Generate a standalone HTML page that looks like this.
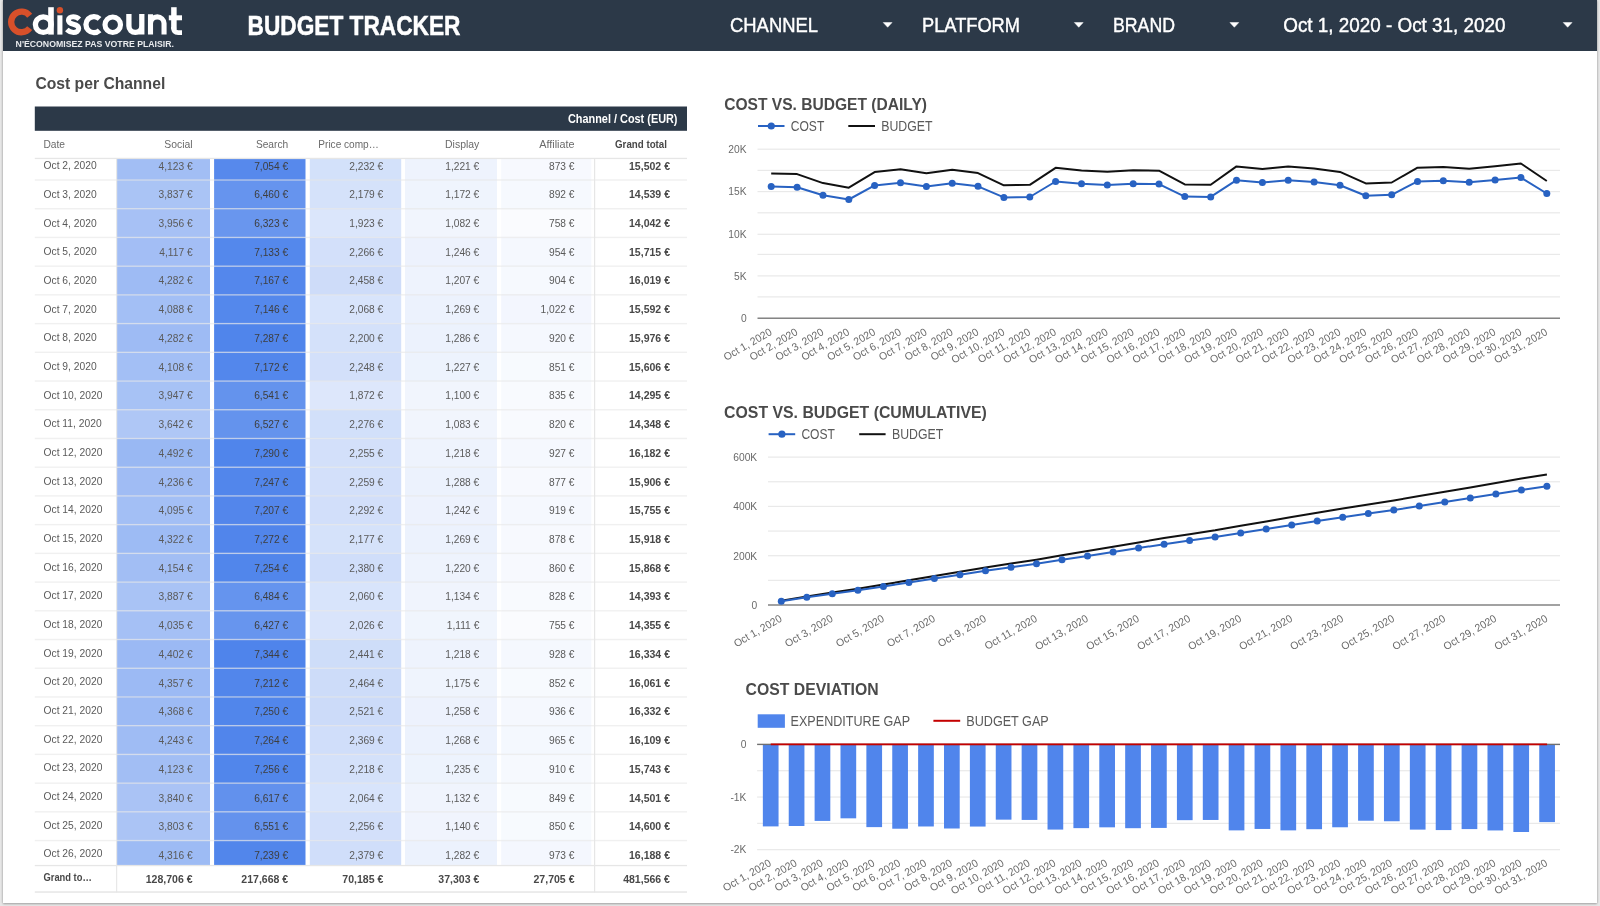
<!DOCTYPE html>
<html lang="en"><head><meta charset="utf-8"><title>Budget Tracker</title>
<style>
html,body{margin:0;padding:0;}
body{width:1600px;height:906px;overflow:hidden;background:#e7e7e7;font-family:"Liberation Sans",sans-serif;position:relative;}
.card{position:absolute;left:3px;top:0;width:1594px;height:903px;background:#ffffff;box-shadow:0 0 2.5px rgba(0,0,0,.22),0 1px 2px rgba(0,0,0,.22);}
.hdr{position:absolute;left:3px;top:0;width:1594px;height:51.3px;background:#2c3948;}
svg{position:absolute;left:0;top:0;overflow:visible;will-change:transform;font-family:"Liberation Sans",sans-serif;}
svg text{white-space:pre;}
</style></head><body>
<div class="card"></div>
<div class="hdr"></div>

<svg id="header" width="1600" height="52" viewBox="0 0 1600 52">
<path d="M 29.68 15.75 A 10.3 10.3 0 1 0 29.68 28.15" fill="none" stroke="#d7502a" stroke-width="6.3"/>
<g fill="none" stroke="#ffffff" stroke-width="5.3">
<ellipse cx="43.3" cy="24.6" rx="7.9" ry="7.8"/><path d="M 51.0 7.2 V 34.6" stroke-width="5.6"/>
<path d="M 59.9 15.3 V 34.6" stroke-width="5.1"/>
<path d="M 79.3 19.3 C 77.6 17.6 75.6 16.7 73.2 16.7 C 70.2 16.7 68.4 18.2 68.4 20.2 C 68.4 22.7 70.6 23.5 73.4 24.2 C 76.6 25.0 78.7 26.0 78.7 28.6 C 78.7 30.9 76.6 32.4 73.5 32.4 C 70.9 32.4 68.6 31.4 66.8 29.6" stroke-width="5.0"/>
<path d="M 99.59 18.81 A 8.05 8.05 0 1 0 99.59 30.39"/>
<circle cx="112.75" cy="24.7" r="7.75" stroke-width="5.15"/>
<path d="M 128.9 14.1 V 26.0 A 6.45 6.45 0 0 0 141.8 26.0 M 141.8 14.1 V 34.6"/>
<path d="M 150.5 14.3 V 34.6 M 150.5 23.4 A 6.78 6.78 0 0 1 164.05 23.4 V 34.6" stroke-width="5.1"/>
<path d="M 173.9 7.2 V 29.5" stroke-width="5.5"/><path d="M 173.6 27.0 C 173.6 31.6 175.6 32.65 178.2 32.65 H 182.0" stroke-width="4.9"/><path d="M 168.8 17.8 H 182.0" stroke-width="5.0"/>
</g>
<circle cx="59.9" cy="10.2" r="3.2" fill="#d7502a"/>
<text x="15.60" y="46.85" font-size="8.3" fill="#e9ebee" font-weight="700" textLength="158.40" lengthAdjust="spacingAndGlyphs">N'ÉCONOMISEZ PAS VOTRE PLAISIR.</text>
<text x="247.50" y="35.30" font-size="27.0" fill="#ffffff" font-weight="700" textLength="213.00" lengthAdjust="spacingAndGlyphs" stroke="#ffffff" stroke-width="0.5">BUDGET TRACKER</text>
<text x="730.00" y="32.20" font-size="19.4" fill="#ffffff" textLength="88.10" lengthAdjust="spacingAndGlyphs" stroke="#ffffff" stroke-width="0.4">CHANNEL</text>
<text x="922.00" y="32.20" font-size="19.4" fill="#ffffff" textLength="98.00" lengthAdjust="spacingAndGlyphs" stroke="#ffffff" stroke-width="0.4">PLATFORM</text>
<text x="1113.00" y="32.20" font-size="19.4" fill="#ffffff" textLength="62.00" lengthAdjust="spacingAndGlyphs" stroke="#ffffff" stroke-width="0.4">BRAND</text>
<text x="1283.25" y="32.20" font-size="19.4" fill="#ffffff" textLength="222.25" lengthAdjust="spacingAndGlyphs" stroke="#ffffff" stroke-width="0.4">Oct 1, 2020 - Oct 31, 2020</text>
<path d="M 883.25 22.55 L 892.05 22.55 L 887.65 27.25 Z" fill="#ffffff" stroke="#ffffff" stroke-width="0.5" stroke-linejoin="round"/>
<path d="M 1074.35 22.55 L 1083.15 22.55 L 1078.75 27.25 Z" fill="#ffffff" stroke="#ffffff" stroke-width="0.5" stroke-linejoin="round"/>
<path d="M 1229.95 22.55 L 1238.75 22.55 L 1234.35 27.25 Z" fill="#ffffff" stroke="#ffffff" stroke-width="0.5" stroke-linejoin="round"/>
<path d="M 1563.25 22.55 L 1572.05 22.55 L 1567.65 27.25 Z" fill="#ffffff" stroke="#ffffff" stroke-width="0.5" stroke-linejoin="round"/>
</svg>
<svg id="table" width="700" height="906" viewBox="0 0 700 906">
<text x="35.40" y="89.00" font-size="16.5" fill="#4a4a4a" font-weight="700" textLength="129.90" lengthAdjust="spacingAndGlyphs">Cost per Channel</text>
<rect x="34.8" y="106.5" width="652.2" height="24.3" fill="#2c3948"/>
<text x="568.00" y="122.50" font-size="12.2" fill="#ffffff" font-weight="700" textLength="109.50" lengthAdjust="spacingAndGlyphs">Channel / Cost (EUR)</text>
<text x="43.40" y="147.60" font-size="10.7" fill="#6a6a6a" textLength="21.60" lengthAdjust="spacingAndGlyphs">Date</text>
<text x="164.30" y="147.60" font-size="10.7" fill="#6a6a6a" textLength="28.30" lengthAdjust="spacingAndGlyphs">Social</text>
<text x="255.90" y="147.60" font-size="10.7" fill="#6a6a6a" textLength="32.30" lengthAdjust="spacingAndGlyphs">Search</text>
<text x="445.05" y="147.60" font-size="10.7" fill="#6a6a6a" textLength="34.25" lengthAdjust="spacingAndGlyphs">Display</text>
<text x="539.25" y="147.60" font-size="10.7" fill="#6a6a6a" textLength="35.25" lengthAdjust="spacingAndGlyphs">Affiliate</text>
<text x="318.30" y="147.60" font-size="10.7" fill="#6a6a6a" textLength="60.50" lengthAdjust="spacingAndGlyphs">Price comp…</text>
<text x="615.00" y="147.60" font-size="10.7" fill="#484848" font-weight="700" textLength="52.00" lengthAdjust="spacingAndGlyphs">Grand total</text>
<clipPath id="clipRows"><rect x="30" y="158.5" width="660" height="706.8"/></clipPath>
<g clip-path="url(#clipRows)">
<rect x="116.9" y="151.28" width="93.1" height="28.77" fill="#a2bef4"/>
<rect x="214.1" y="151.28" width="91.4" height="28.77" fill="#5789ec"/>
<rect x="309.8" y="151.28" width="91.4" height="28.77" fill="#d3e1fa"/>
<rect x="405.0" y="151.28" width="92.0" height="28.77" fill="#eef3fd"/>
<rect x="501.2" y="151.28" width="90.1" height="28.77" fill="#f7f9fe"/>
<rect x="116.9" y="180.00" width="93.1" height="28.77" fill="#aac4f5"/>
<rect x="214.1" y="180.00" width="91.4" height="28.77" fill="#6694ee"/>
<rect x="309.8" y="180.00" width="91.4" height="28.77" fill="#d5e2fa"/>
<rect x="405.0" y="180.00" width="92.0" height="28.77" fill="#eff4fd"/>
<rect x="501.2" y="180.00" width="90.1" height="28.77" fill="#f6f9fe"/>
<rect x="116.9" y="208.72" width="93.1" height="28.77" fill="#a7c1f5"/>
<rect x="214.1" y="208.72" width="91.4" height="28.77" fill="#6996ee"/>
<rect x="309.8" y="208.72" width="91.4" height="28.77" fill="#dbe6fb"/>
<rect x="405.0" y="208.72" width="92.0" height="28.77" fill="#f1f5fd"/>
<rect x="501.2" y="208.72" width="90.1" height="28.77" fill="#fafbfe"/>
<rect x="116.9" y="237.44" width="93.1" height="28.77" fill="#a3bef5"/>
<rect x="214.1" y="237.44" width="91.4" height="28.77" fill="#5488ec"/>
<rect x="309.8" y="237.44" width="91.4" height="28.77" fill="#d3e0fa"/>
<rect x="405.0" y="237.44" width="92.0" height="28.77" fill="#edf2fd"/>
<rect x="501.2" y="237.44" width="90.1" height="28.77" fill="#f5f8fe"/>
<rect x="116.9" y="266.16" width="93.1" height="28.77" fill="#9ebbf4"/>
<rect x="214.1" y="266.16" width="91.4" height="28.77" fill="#5487ec"/>
<rect x="309.8" y="266.16" width="91.4" height="28.77" fill="#cedcf9"/>
<rect x="405.0" y="266.16" width="92.0" height="28.77" fill="#eef3fd"/>
<rect x="501.2" y="266.16" width="90.1" height="28.77" fill="#f6f9fe"/>
<rect x="116.9" y="294.88" width="93.1" height="28.77" fill="#a3bff5"/>
<rect x="214.1" y="294.88" width="91.4" height="28.77" fill="#5488ec"/>
<rect x="309.8" y="294.88" width="91.4" height="28.77" fill="#d8e4fb"/>
<rect x="405.0" y="294.88" width="92.0" height="28.77" fill="#ecf2fd"/>
<rect x="501.2" y="294.88" width="90.1" height="28.77" fill="#f3f6fe"/>
<rect x="116.9" y="323.60" width="93.1" height="28.77" fill="#9ebbf4"/>
<rect x="214.1" y="323.60" width="91.4" height="28.77" fill="#5085eb"/>
<rect x="309.8" y="323.60" width="91.4" height="28.77" fill="#d4e1fa"/>
<rect x="405.0" y="323.60" width="92.0" height="28.77" fill="#ecf2fd"/>
<rect x="501.2" y="323.60" width="90.1" height="28.77" fill="#f5f8fe"/>
<rect x="116.9" y="352.32" width="93.1" height="28.77" fill="#a3bff5"/>
<rect x="214.1" y="352.32" width="91.4" height="28.77" fill="#5387ec"/>
<rect x="309.8" y="352.32" width="91.4" height="28.77" fill="#d3e0fa"/>
<rect x="405.0" y="352.32" width="92.0" height="28.77" fill="#edf3fd"/>
<rect x="501.2" y="352.32" width="90.1" height="28.77" fill="#f7fafe"/>
<rect x="116.9" y="381.04" width="93.1" height="28.77" fill="#a7c2f5"/>
<rect x="214.1" y="381.04" width="91.4" height="28.77" fill="#6493ed"/>
<rect x="309.8" y="381.04" width="91.4" height="28.77" fill="#dde7fb"/>
<rect x="405.0" y="381.04" width="92.0" height="28.77" fill="#f1f5fd"/>
<rect x="501.2" y="381.04" width="90.1" height="28.77" fill="#f8fafe"/>
<rect x="116.9" y="409.76" width="93.1" height="28.77" fill="#afc7f6"/>
<rect x="214.1" y="409.76" width="91.4" height="28.77" fill="#6493ed"/>
<rect x="309.8" y="409.76" width="91.4" height="28.77" fill="#d2e0fa"/>
<rect x="405.0" y="409.76" width="92.0" height="28.77" fill="#f1f5fd"/>
<rect x="501.2" y="409.76" width="90.1" height="28.77" fill="#f8fafe"/>
<rect x="116.9" y="438.48" width="93.1" height="28.77" fill="#99b8f3"/>
<rect x="214.1" y="438.48" width="91.4" height="28.77" fill="#5085eb"/>
<rect x="309.8" y="438.48" width="91.4" height="28.77" fill="#d3e0fa"/>
<rect x="405.0" y="438.48" width="92.0" height="28.77" fill="#eef3fd"/>
<rect x="501.2" y="438.48" width="90.1" height="28.77" fill="#f5f8fe"/>
<rect x="116.9" y="467.20" width="93.1" height="28.77" fill="#a0bcf4"/>
<rect x="214.1" y="467.20" width="91.4" height="28.77" fill="#5286eb"/>
<rect x="309.8" y="467.20" width="91.4" height="28.77" fill="#d3e0fa"/>
<rect x="405.0" y="467.20" width="92.0" height="28.77" fill="#ecf2fd"/>
<rect x="501.2" y="467.20" width="90.1" height="28.77" fill="#f7f9fe"/>
<rect x="116.9" y="495.92" width="93.1" height="28.77" fill="#a3bff5"/>
<rect x="214.1" y="495.92" width="91.4" height="28.77" fill="#5386eb"/>
<rect x="309.8" y="495.92" width="91.4" height="28.77" fill="#d2dffa"/>
<rect x="405.0" y="495.92" width="92.0" height="28.77" fill="#edf2fd"/>
<rect x="501.2" y="495.92" width="90.1" height="28.77" fill="#f5f8fe"/>
<rect x="116.9" y="524.64" width="93.1" height="28.77" fill="#9dbbf4"/>
<rect x="214.1" y="524.64" width="91.4" height="28.77" fill="#5185eb"/>
<rect x="309.8" y="524.64" width="91.4" height="28.77" fill="#d5e2fa"/>
<rect x="405.0" y="524.64" width="92.0" height="28.77" fill="#ecf2fd"/>
<rect x="501.2" y="524.64" width="90.1" height="28.77" fill="#f7f9fe"/>
<rect x="116.9" y="553.36" width="93.1" height="28.77" fill="#a2bef4"/>
<rect x="214.1" y="553.36" width="91.4" height="28.77" fill="#5186eb"/>
<rect x="309.8" y="553.36" width="91.4" height="28.77" fill="#d0defa"/>
<rect x="405.0" y="553.36" width="92.0" height="28.77" fill="#eef3fd"/>
<rect x="501.2" y="553.36" width="90.1" height="28.77" fill="#f7f9fe"/>
<rect x="116.9" y="582.08" width="93.1" height="28.77" fill="#a9c3f5"/>
<rect x="214.1" y="582.08" width="91.4" height="28.77" fill="#6594ee"/>
<rect x="309.8" y="582.08" width="91.4" height="28.77" fill="#d8e4fb"/>
<rect x="405.0" y="582.08" width="92.0" height="28.77" fill="#f0f4fd"/>
<rect x="501.2" y="582.08" width="90.1" height="28.77" fill="#f8fafe"/>
<rect x="116.9" y="610.80" width="93.1" height="28.77" fill="#a5c0f5"/>
<rect x="214.1" y="610.80" width="91.4" height="28.77" fill="#6795ee"/>
<rect x="309.8" y="610.80" width="91.4" height="28.77" fill="#d9e4fb"/>
<rect x="405.0" y="610.80" width="92.0" height="28.77" fill="#f0f5fd"/>
<rect x="501.2" y="610.80" width="90.1" height="28.77" fill="#fafbfe"/>
<rect x="116.9" y="639.52" width="93.1" height="28.77" fill="#9bb9f4"/>
<rect x="214.1" y="639.52" width="91.4" height="28.77" fill="#4f84eb"/>
<rect x="309.8" y="639.52" width="91.4" height="28.77" fill="#ceddf9"/>
<rect x="405.0" y="639.52" width="92.0" height="28.77" fill="#eef3fd"/>
<rect x="501.2" y="639.52" width="90.1" height="28.77" fill="#f5f8fe"/>
<rect x="116.9" y="668.24" width="93.1" height="28.77" fill="#9cbaf4"/>
<rect x="214.1" y="668.24" width="91.4" height="28.77" fill="#5286eb"/>
<rect x="309.8" y="668.24" width="91.4" height="28.77" fill="#cddcf9"/>
<rect x="405.0" y="668.24" width="92.0" height="28.77" fill="#eff4fd"/>
<rect x="501.2" y="668.24" width="90.1" height="28.77" fill="#f7fafe"/>
<rect x="116.9" y="696.96" width="93.1" height="28.77" fill="#9cbaf4"/>
<rect x="214.1" y="696.96" width="91.4" height="28.77" fill="#5186eb"/>
<rect x="309.8" y="696.96" width="91.4" height="28.77" fill="#ccdbf9"/>
<rect x="405.0" y="696.96" width="92.0" height="28.77" fill="#edf2fd"/>
<rect x="501.2" y="696.96" width="90.1" height="28.77" fill="#f5f8fe"/>
<rect x="116.9" y="725.68" width="93.1" height="28.77" fill="#9fbcf4"/>
<rect x="214.1" y="725.68" width="91.4" height="28.77" fill="#5185eb"/>
<rect x="309.8" y="725.68" width="91.4" height="28.77" fill="#d0defa"/>
<rect x="405.0" y="725.68" width="92.0" height="28.77" fill="#ecf2fd"/>
<rect x="501.2" y="725.68" width="90.1" height="28.77" fill="#f4f8fe"/>
<rect x="116.9" y="754.40" width="93.1" height="28.77" fill="#a2bef4"/>
<rect x="214.1" y="754.40" width="91.4" height="28.77" fill="#5186eb"/>
<rect x="309.8" y="754.40" width="91.4" height="28.77" fill="#d4e1fa"/>
<rect x="405.0" y="754.40" width="92.0" height="28.77" fill="#edf3fd"/>
<rect x="501.2" y="754.40" width="90.1" height="28.77" fill="#f6f9fe"/>
<rect x="116.9" y="783.12" width="93.1" height="28.77" fill="#aac3f5"/>
<rect x="214.1" y="783.12" width="91.4" height="28.77" fill="#6291ed"/>
<rect x="309.8" y="783.12" width="91.4" height="28.77" fill="#d8e4fb"/>
<rect x="405.0" y="783.12" width="92.0" height="28.77" fill="#f0f4fd"/>
<rect x="501.2" y="783.12" width="90.1" height="28.77" fill="#f7fafe"/>
<rect x="116.9" y="811.84" width="93.1" height="28.77" fill="#abc4f5"/>
<rect x="214.1" y="811.84" width="91.4" height="28.77" fill="#6492ed"/>
<rect x="309.8" y="811.84" width="91.4" height="28.77" fill="#d3e0fa"/>
<rect x="405.0" y="811.84" width="92.0" height="28.77" fill="#f0f4fd"/>
<rect x="501.2" y="811.84" width="90.1" height="28.77" fill="#f7fafe"/>
<rect x="116.9" y="840.56" width="93.1" height="28.77" fill="#9dbbf4"/>
<rect x="214.1" y="840.56" width="91.4" height="28.77" fill="#5286eb"/>
<rect x="309.8" y="840.56" width="91.4" height="28.77" fill="#d0defa"/>
<rect x="405.0" y="840.56" width="92.0" height="28.77" fill="#ecf2fd"/>
<rect x="501.2" y="840.56" width="90.1" height="28.77" fill="#f4f7fe"/>
</g>
<g fill="#e6e6e6">
<rect x="34.8" y="157.8" width="652.2" height="1.3"/>
<rect x="34.8" y="179.30" width="652.2" height="1.4" fill-opacity="0.62"/>
<rect x="34.8" y="208.02" width="652.2" height="1.4" fill-opacity="0.62"/>
<rect x="34.8" y="236.74" width="652.2" height="1.4" fill-opacity="0.62"/>
<rect x="34.8" y="265.46" width="652.2" height="1.4" fill-opacity="0.62"/>
<rect x="34.8" y="294.18" width="652.2" height="1.4" fill-opacity="0.62"/>
<rect x="34.8" y="322.90" width="652.2" height="1.4" fill-opacity="0.62"/>
<rect x="34.8" y="351.62" width="652.2" height="1.4" fill-opacity="0.62"/>
<rect x="34.8" y="380.34" width="652.2" height="1.4" fill-opacity="0.62"/>
<rect x="34.8" y="409.06" width="652.2" height="1.4" fill-opacity="0.62"/>
<rect x="34.8" y="437.78" width="652.2" height="1.4" fill-opacity="0.62"/>
<rect x="34.8" y="466.50" width="652.2" height="1.4" fill-opacity="0.62"/>
<rect x="34.8" y="495.22" width="652.2" height="1.4" fill-opacity="0.62"/>
<rect x="34.8" y="523.94" width="652.2" height="1.4" fill-opacity="0.62"/>
<rect x="34.8" y="552.66" width="652.2" height="1.4" fill-opacity="0.62"/>
<rect x="34.8" y="581.38" width="652.2" height="1.4" fill-opacity="0.62"/>
<rect x="34.8" y="610.10" width="652.2" height="1.4" fill-opacity="0.62"/>
<rect x="34.8" y="638.82" width="652.2" height="1.4" fill-opacity="0.62"/>
<rect x="34.8" y="667.54" width="652.2" height="1.4" fill-opacity="0.62"/>
<rect x="34.8" y="696.26" width="652.2" height="1.4" fill-opacity="0.62"/>
<rect x="34.8" y="724.98" width="652.2" height="1.4" fill-opacity="0.62"/>
<rect x="34.8" y="753.70" width="652.2" height="1.4" fill-opacity="0.62"/>
<rect x="34.8" y="782.42" width="652.2" height="1.4" fill-opacity="0.62"/>
<rect x="34.8" y="811.14" width="652.2" height="1.4" fill-opacity="0.62"/>
<rect x="34.8" y="839.86" width="652.2" height="1.4" fill-opacity="0.62"/>
<rect x="34.8" y="864.9" width="652.2" height="1.3"/>
<rect x="34.8" y="891.3" width="652.2" height="1.5"/>
<rect x="116.1" y="158.5" width="1.1" height="733.9"/>
<rect x="594.0" y="158.5" width="1.2" height="733.9"/>
</g>
<g clip-path="url(#clipRows)">
<text x="43.50" y="169.33" font-size="10.8" fill="#5a5a5a" textLength="53.16" lengthAdjust="spacingAndGlyphs">Oct 2, 2020</text>
<text x="158.58" y="169.52" font-size="10.8" fill="#5a5a5a" textLength="34.02" lengthAdjust="spacingAndGlyphs">4,123 €</text>
<text x="254.18" y="169.52" font-size="10.8" fill="#3e3e3e" textLength="34.02" lengthAdjust="spacingAndGlyphs">7,054 €</text>
<text x="349.28" y="169.52" font-size="10.8" fill="#5a5a5a" textLength="34.02" lengthAdjust="spacingAndGlyphs">2,232 €</text>
<text x="445.28" y="169.52" font-size="10.8" fill="#5a5a5a" textLength="34.02" lengthAdjust="spacingAndGlyphs">1,221 €</text>
<text x="548.99" y="169.52" font-size="10.8" fill="#5a5a5a" textLength="25.51" lengthAdjust="spacingAndGlyphs">873 €</text>
<text x="629.01" y="169.52" font-size="10.8" fill="#484848" font-weight="700" textLength="40.99" lengthAdjust="spacingAndGlyphs">15,502 €</text>
<text x="43.50" y="198.00" font-size="10.8" fill="#5a5a5a" textLength="53.16" lengthAdjust="spacingAndGlyphs">Oct 3, 2020</text>
<text x="158.58" y="198.25" font-size="10.8" fill="#5a5a5a" textLength="34.02" lengthAdjust="spacingAndGlyphs">3,837 €</text>
<text x="254.18" y="198.25" font-size="10.8" fill="#3e3e3e" textLength="34.02" lengthAdjust="spacingAndGlyphs">6,460 €</text>
<text x="349.28" y="198.25" font-size="10.8" fill="#5a5a5a" textLength="34.02" lengthAdjust="spacingAndGlyphs">2,179 €</text>
<text x="445.28" y="198.25" font-size="10.8" fill="#5a5a5a" textLength="34.02" lengthAdjust="spacingAndGlyphs">1,172 €</text>
<text x="548.99" y="198.25" font-size="10.8" fill="#5a5a5a" textLength="25.51" lengthAdjust="spacingAndGlyphs">892 €</text>
<text x="629.01" y="198.25" font-size="10.8" fill="#484848" font-weight="700" textLength="40.99" lengthAdjust="spacingAndGlyphs">14,539 €</text>
<text x="43.50" y="226.67" font-size="10.8" fill="#5a5a5a" textLength="53.16" lengthAdjust="spacingAndGlyphs">Oct 4, 2020</text>
<text x="158.58" y="226.98" font-size="10.8" fill="#5a5a5a" textLength="34.02" lengthAdjust="spacingAndGlyphs">3,956 €</text>
<text x="254.18" y="226.98" font-size="10.8" fill="#3e3e3e" textLength="34.02" lengthAdjust="spacingAndGlyphs">6,323 €</text>
<text x="349.28" y="226.98" font-size="10.8" fill="#5a5a5a" textLength="34.02" lengthAdjust="spacingAndGlyphs">1,923 €</text>
<text x="445.28" y="226.98" font-size="10.8" fill="#5a5a5a" textLength="34.02" lengthAdjust="spacingAndGlyphs">1,082 €</text>
<text x="548.99" y="226.98" font-size="10.8" fill="#5a5a5a" textLength="25.51" lengthAdjust="spacingAndGlyphs">758 €</text>
<text x="629.01" y="226.98" font-size="10.8" fill="#484848" font-weight="700" textLength="40.99" lengthAdjust="spacingAndGlyphs">14,042 €</text>
<text x="43.50" y="255.34" font-size="10.8" fill="#5a5a5a" textLength="53.16" lengthAdjust="spacingAndGlyphs">Oct 5, 2020</text>
<text x="159.34" y="255.71" font-size="10.8" fill="#5a5a5a" textLength="33.26" lengthAdjust="spacingAndGlyphs">4,117 €</text>
<text x="254.18" y="255.71" font-size="10.8" fill="#3e3e3e" textLength="34.02" lengthAdjust="spacingAndGlyphs">7,133 €</text>
<text x="349.28" y="255.71" font-size="10.8" fill="#5a5a5a" textLength="34.02" lengthAdjust="spacingAndGlyphs">2,266 €</text>
<text x="445.28" y="255.71" font-size="10.8" fill="#5a5a5a" textLength="34.02" lengthAdjust="spacingAndGlyphs">1,246 €</text>
<text x="548.99" y="255.71" font-size="10.8" fill="#5a5a5a" textLength="25.51" lengthAdjust="spacingAndGlyphs">954 €</text>
<text x="629.01" y="255.71" font-size="10.8" fill="#484848" font-weight="700" textLength="40.99" lengthAdjust="spacingAndGlyphs">15,715 €</text>
<text x="43.50" y="284.01" font-size="10.8" fill="#5a5a5a" textLength="53.16" lengthAdjust="spacingAndGlyphs">Oct 6, 2020</text>
<text x="158.58" y="284.44" font-size="10.8" fill="#5a5a5a" textLength="34.02" lengthAdjust="spacingAndGlyphs">4,282 €</text>
<text x="254.18" y="284.44" font-size="10.8" fill="#3e3e3e" textLength="34.02" lengthAdjust="spacingAndGlyphs">7,167 €</text>
<text x="349.28" y="284.44" font-size="10.8" fill="#5a5a5a" textLength="34.02" lengthAdjust="spacingAndGlyphs">2,458 €</text>
<text x="445.28" y="284.44" font-size="10.8" fill="#5a5a5a" textLength="34.02" lengthAdjust="spacingAndGlyphs">1,207 €</text>
<text x="548.99" y="284.44" font-size="10.8" fill="#5a5a5a" textLength="25.51" lengthAdjust="spacingAndGlyphs">904 €</text>
<text x="629.01" y="284.44" font-size="10.8" fill="#484848" font-weight="700" textLength="40.99" lengthAdjust="spacingAndGlyphs">16,019 €</text>
<text x="43.50" y="312.68" font-size="10.8" fill="#5a5a5a" textLength="53.16" lengthAdjust="spacingAndGlyphs">Oct 7, 2020</text>
<text x="158.58" y="313.17" font-size="10.8" fill="#5a5a5a" textLength="34.02" lengthAdjust="spacingAndGlyphs">4,088 €</text>
<text x="254.18" y="313.17" font-size="10.8" fill="#3e3e3e" textLength="34.02" lengthAdjust="spacingAndGlyphs">7,146 €</text>
<text x="349.28" y="313.17" font-size="10.8" fill="#5a5a5a" textLength="34.02" lengthAdjust="spacingAndGlyphs">2,068 €</text>
<text x="445.28" y="313.17" font-size="10.8" fill="#5a5a5a" textLength="34.02" lengthAdjust="spacingAndGlyphs">1,269 €</text>
<text x="540.48" y="313.17" font-size="10.8" fill="#5a5a5a" textLength="34.02" lengthAdjust="spacingAndGlyphs">1,022 €</text>
<text x="629.01" y="313.17" font-size="10.8" fill="#484848" font-weight="700" textLength="40.99" lengthAdjust="spacingAndGlyphs">15,592 €</text>
<text x="43.50" y="341.35" font-size="10.8" fill="#5a5a5a" textLength="53.16" lengthAdjust="spacingAndGlyphs">Oct 8, 2020</text>
<text x="158.58" y="341.90" font-size="10.8" fill="#5a5a5a" textLength="34.02" lengthAdjust="spacingAndGlyphs">4,282 €</text>
<text x="254.18" y="341.90" font-size="10.8" fill="#3e3e3e" textLength="34.02" lengthAdjust="spacingAndGlyphs">7,287 €</text>
<text x="349.28" y="341.90" font-size="10.8" fill="#5a5a5a" textLength="34.02" lengthAdjust="spacingAndGlyphs">2,200 €</text>
<text x="445.28" y="341.90" font-size="10.8" fill="#5a5a5a" textLength="34.02" lengthAdjust="spacingAndGlyphs">1,286 €</text>
<text x="548.99" y="341.90" font-size="10.8" fill="#5a5a5a" textLength="25.51" lengthAdjust="spacingAndGlyphs">920 €</text>
<text x="629.01" y="341.90" font-size="10.8" fill="#484848" font-weight="700" textLength="40.99" lengthAdjust="spacingAndGlyphs">15,976 €</text>
<text x="43.50" y="370.02" font-size="10.8" fill="#5a5a5a" textLength="53.16" lengthAdjust="spacingAndGlyphs">Oct 9, 2020</text>
<text x="158.58" y="370.63" font-size="10.8" fill="#5a5a5a" textLength="34.02" lengthAdjust="spacingAndGlyphs">4,108 €</text>
<text x="254.18" y="370.63" font-size="10.8" fill="#3e3e3e" textLength="34.02" lengthAdjust="spacingAndGlyphs">7,172 €</text>
<text x="349.28" y="370.63" font-size="10.8" fill="#5a5a5a" textLength="34.02" lengthAdjust="spacingAndGlyphs">2,248 €</text>
<text x="445.28" y="370.63" font-size="10.8" fill="#5a5a5a" textLength="34.02" lengthAdjust="spacingAndGlyphs">1,227 €</text>
<text x="548.99" y="370.63" font-size="10.8" fill="#5a5a5a" textLength="25.51" lengthAdjust="spacingAndGlyphs">851 €</text>
<text x="629.01" y="370.63" font-size="10.8" fill="#484848" font-weight="700" textLength="40.99" lengthAdjust="spacingAndGlyphs">15,606 €</text>
<text x="43.50" y="398.69" font-size="10.8" fill="#5a5a5a" textLength="58.87" lengthAdjust="spacingAndGlyphs">Oct 10, 2020</text>
<text x="158.58" y="399.36" font-size="10.8" fill="#5a5a5a" textLength="34.02" lengthAdjust="spacingAndGlyphs">3,947 €</text>
<text x="254.18" y="399.36" font-size="10.8" fill="#3e3e3e" textLength="34.02" lengthAdjust="spacingAndGlyphs">6,541 €</text>
<text x="349.28" y="399.36" font-size="10.8" fill="#5a5a5a" textLength="34.02" lengthAdjust="spacingAndGlyphs">1,872 €</text>
<text x="445.28" y="399.36" font-size="10.8" fill="#5a5a5a" textLength="34.02" lengthAdjust="spacingAndGlyphs">1,100 €</text>
<text x="548.99" y="399.36" font-size="10.8" fill="#5a5a5a" textLength="25.51" lengthAdjust="spacingAndGlyphs">835 €</text>
<text x="629.01" y="399.36" font-size="10.8" fill="#484848" font-weight="700" textLength="40.99" lengthAdjust="spacingAndGlyphs">14,295 €</text>
<text x="43.50" y="427.36" font-size="10.8" fill="#5a5a5a" textLength="58.11" lengthAdjust="spacingAndGlyphs">Oct 11, 2020</text>
<text x="158.58" y="428.09" font-size="10.8" fill="#5a5a5a" textLength="34.02" lengthAdjust="spacingAndGlyphs">3,642 €</text>
<text x="254.18" y="428.09" font-size="10.8" fill="#3e3e3e" textLength="34.02" lengthAdjust="spacingAndGlyphs">6,527 €</text>
<text x="349.28" y="428.09" font-size="10.8" fill="#5a5a5a" textLength="34.02" lengthAdjust="spacingAndGlyphs">2,276 €</text>
<text x="445.28" y="428.09" font-size="10.8" fill="#5a5a5a" textLength="34.02" lengthAdjust="spacingAndGlyphs">1,083 €</text>
<text x="548.99" y="428.09" font-size="10.8" fill="#5a5a5a" textLength="25.51" lengthAdjust="spacingAndGlyphs">820 €</text>
<text x="629.01" y="428.09" font-size="10.8" fill="#484848" font-weight="700" textLength="40.99" lengthAdjust="spacingAndGlyphs">14,348 €</text>
<text x="43.50" y="456.03" font-size="10.8" fill="#5a5a5a" textLength="58.87" lengthAdjust="spacingAndGlyphs">Oct 12, 2020</text>
<text x="158.58" y="456.82" font-size="10.8" fill="#5a5a5a" textLength="34.02" lengthAdjust="spacingAndGlyphs">4,492 €</text>
<text x="254.18" y="456.82" font-size="10.8" fill="#3e3e3e" textLength="34.02" lengthAdjust="spacingAndGlyphs">7,290 €</text>
<text x="349.28" y="456.82" font-size="10.8" fill="#5a5a5a" textLength="34.02" lengthAdjust="spacingAndGlyphs">2,255 €</text>
<text x="445.28" y="456.82" font-size="10.8" fill="#5a5a5a" textLength="34.02" lengthAdjust="spacingAndGlyphs">1,218 €</text>
<text x="548.99" y="456.82" font-size="10.8" fill="#5a5a5a" textLength="25.51" lengthAdjust="spacingAndGlyphs">927 €</text>
<text x="629.01" y="456.82" font-size="10.8" fill="#484848" font-weight="700" textLength="40.99" lengthAdjust="spacingAndGlyphs">16,182 €</text>
<text x="43.50" y="484.70" font-size="10.8" fill="#5a5a5a" textLength="58.87" lengthAdjust="spacingAndGlyphs">Oct 13, 2020</text>
<text x="158.58" y="485.55" font-size="10.8" fill="#5a5a5a" textLength="34.02" lengthAdjust="spacingAndGlyphs">4,236 €</text>
<text x="254.18" y="485.55" font-size="10.8" fill="#3e3e3e" textLength="34.02" lengthAdjust="spacingAndGlyphs">7,247 €</text>
<text x="349.28" y="485.55" font-size="10.8" fill="#5a5a5a" textLength="34.02" lengthAdjust="spacingAndGlyphs">2,259 €</text>
<text x="445.28" y="485.55" font-size="10.8" fill="#5a5a5a" textLength="34.02" lengthAdjust="spacingAndGlyphs">1,288 €</text>
<text x="548.99" y="485.55" font-size="10.8" fill="#5a5a5a" textLength="25.51" lengthAdjust="spacingAndGlyphs">877 €</text>
<text x="629.01" y="485.55" font-size="10.8" fill="#484848" font-weight="700" textLength="40.99" lengthAdjust="spacingAndGlyphs">15,906 €</text>
<text x="43.50" y="513.37" font-size="10.8" fill="#5a5a5a" textLength="58.87" lengthAdjust="spacingAndGlyphs">Oct 14, 2020</text>
<text x="158.58" y="514.28" font-size="10.8" fill="#5a5a5a" textLength="34.02" lengthAdjust="spacingAndGlyphs">4,095 €</text>
<text x="254.18" y="514.28" font-size="10.8" fill="#3e3e3e" textLength="34.02" lengthAdjust="spacingAndGlyphs">7,207 €</text>
<text x="349.28" y="514.28" font-size="10.8" fill="#5a5a5a" textLength="34.02" lengthAdjust="spacingAndGlyphs">2,292 €</text>
<text x="445.28" y="514.28" font-size="10.8" fill="#5a5a5a" textLength="34.02" lengthAdjust="spacingAndGlyphs">1,242 €</text>
<text x="548.99" y="514.28" font-size="10.8" fill="#5a5a5a" textLength="25.51" lengthAdjust="spacingAndGlyphs">919 €</text>
<text x="629.01" y="514.28" font-size="10.8" fill="#484848" font-weight="700" textLength="40.99" lengthAdjust="spacingAndGlyphs">15,755 €</text>
<text x="43.50" y="542.04" font-size="10.8" fill="#5a5a5a" textLength="58.87" lengthAdjust="spacingAndGlyphs">Oct 15, 2020</text>
<text x="158.58" y="543.01" font-size="10.8" fill="#5a5a5a" textLength="34.02" lengthAdjust="spacingAndGlyphs">4,322 €</text>
<text x="254.18" y="543.01" font-size="10.8" fill="#3e3e3e" textLength="34.02" lengthAdjust="spacingAndGlyphs">7,272 €</text>
<text x="349.28" y="543.01" font-size="10.8" fill="#5a5a5a" textLength="34.02" lengthAdjust="spacingAndGlyphs">2,177 €</text>
<text x="445.28" y="543.01" font-size="10.8" fill="#5a5a5a" textLength="34.02" lengthAdjust="spacingAndGlyphs">1,269 €</text>
<text x="548.99" y="543.01" font-size="10.8" fill="#5a5a5a" textLength="25.51" lengthAdjust="spacingAndGlyphs">878 €</text>
<text x="629.01" y="543.01" font-size="10.8" fill="#484848" font-weight="700" textLength="40.99" lengthAdjust="spacingAndGlyphs">15,918 €</text>
<text x="43.50" y="570.71" font-size="10.8" fill="#5a5a5a" textLength="58.87" lengthAdjust="spacingAndGlyphs">Oct 16, 2020</text>
<text x="158.58" y="571.74" font-size="10.8" fill="#5a5a5a" textLength="34.02" lengthAdjust="spacingAndGlyphs">4,154 €</text>
<text x="254.18" y="571.74" font-size="10.8" fill="#3e3e3e" textLength="34.02" lengthAdjust="spacingAndGlyphs">7,254 €</text>
<text x="349.28" y="571.74" font-size="10.8" fill="#5a5a5a" textLength="34.02" lengthAdjust="spacingAndGlyphs">2,380 €</text>
<text x="445.28" y="571.74" font-size="10.8" fill="#5a5a5a" textLength="34.02" lengthAdjust="spacingAndGlyphs">1,220 €</text>
<text x="548.99" y="571.74" font-size="10.8" fill="#5a5a5a" textLength="25.51" lengthAdjust="spacingAndGlyphs">860 €</text>
<text x="629.01" y="571.74" font-size="10.8" fill="#484848" font-weight="700" textLength="40.99" lengthAdjust="spacingAndGlyphs">15,868 €</text>
<text x="43.50" y="599.38" font-size="10.8" fill="#5a5a5a" textLength="58.87" lengthAdjust="spacingAndGlyphs">Oct 17, 2020</text>
<text x="158.58" y="600.47" font-size="10.8" fill="#5a5a5a" textLength="34.02" lengthAdjust="spacingAndGlyphs">3,887 €</text>
<text x="254.18" y="600.47" font-size="10.8" fill="#3e3e3e" textLength="34.02" lengthAdjust="spacingAndGlyphs">6,484 €</text>
<text x="349.28" y="600.47" font-size="10.8" fill="#5a5a5a" textLength="34.02" lengthAdjust="spacingAndGlyphs">2,060 €</text>
<text x="445.28" y="600.47" font-size="10.8" fill="#5a5a5a" textLength="34.02" lengthAdjust="spacingAndGlyphs">1,134 €</text>
<text x="548.99" y="600.47" font-size="10.8" fill="#5a5a5a" textLength="25.51" lengthAdjust="spacingAndGlyphs">828 €</text>
<text x="629.01" y="600.47" font-size="10.8" fill="#484848" font-weight="700" textLength="40.99" lengthAdjust="spacingAndGlyphs">14,393 €</text>
<text x="43.50" y="628.05" font-size="10.8" fill="#5a5a5a" textLength="58.87" lengthAdjust="spacingAndGlyphs">Oct 18, 2020</text>
<text x="158.58" y="629.20" font-size="10.8" fill="#5a5a5a" textLength="34.02" lengthAdjust="spacingAndGlyphs">4,035 €</text>
<text x="254.18" y="629.20" font-size="10.8" fill="#3e3e3e" textLength="34.02" lengthAdjust="spacingAndGlyphs">6,427 €</text>
<text x="349.28" y="629.20" font-size="10.8" fill="#5a5a5a" textLength="34.02" lengthAdjust="spacingAndGlyphs">2,026 €</text>
<text x="446.80" y="629.20" font-size="10.8" fill="#5a5a5a" textLength="32.50" lengthAdjust="spacingAndGlyphs">1,111 €</text>
<text x="548.99" y="629.20" font-size="10.8" fill="#5a5a5a" textLength="25.51" lengthAdjust="spacingAndGlyphs">755 €</text>
<text x="629.01" y="629.20" font-size="10.8" fill="#484848" font-weight="700" textLength="40.99" lengthAdjust="spacingAndGlyphs">14,355 €</text>
<text x="43.50" y="656.72" font-size="10.8" fill="#5a5a5a" textLength="58.87" lengthAdjust="spacingAndGlyphs">Oct 19, 2020</text>
<text x="158.58" y="657.93" font-size="10.8" fill="#5a5a5a" textLength="34.02" lengthAdjust="spacingAndGlyphs">4,402 €</text>
<text x="254.18" y="657.93" font-size="10.8" fill="#3e3e3e" textLength="34.02" lengthAdjust="spacingAndGlyphs">7,344 €</text>
<text x="349.28" y="657.93" font-size="10.8" fill="#5a5a5a" textLength="34.02" lengthAdjust="spacingAndGlyphs">2,441 €</text>
<text x="445.28" y="657.93" font-size="10.8" fill="#5a5a5a" textLength="34.02" lengthAdjust="spacingAndGlyphs">1,218 €</text>
<text x="548.99" y="657.93" font-size="10.8" fill="#5a5a5a" textLength="25.51" lengthAdjust="spacingAndGlyphs">928 €</text>
<text x="629.01" y="657.93" font-size="10.8" fill="#484848" font-weight="700" textLength="40.99" lengthAdjust="spacingAndGlyphs">16,334 €</text>
<text x="43.50" y="685.39" font-size="10.8" fill="#5a5a5a" textLength="58.87" lengthAdjust="spacingAndGlyphs">Oct 20, 2020</text>
<text x="158.58" y="686.66" font-size="10.8" fill="#5a5a5a" textLength="34.02" lengthAdjust="spacingAndGlyphs">4,357 €</text>
<text x="254.18" y="686.66" font-size="10.8" fill="#3e3e3e" textLength="34.02" lengthAdjust="spacingAndGlyphs">7,212 €</text>
<text x="349.28" y="686.66" font-size="10.8" fill="#5a5a5a" textLength="34.02" lengthAdjust="spacingAndGlyphs">2,464 €</text>
<text x="445.28" y="686.66" font-size="10.8" fill="#5a5a5a" textLength="34.02" lengthAdjust="spacingAndGlyphs">1,175 €</text>
<text x="548.99" y="686.66" font-size="10.8" fill="#5a5a5a" textLength="25.51" lengthAdjust="spacingAndGlyphs">852 €</text>
<text x="629.01" y="686.66" font-size="10.8" fill="#484848" font-weight="700" textLength="40.99" lengthAdjust="spacingAndGlyphs">16,061 €</text>
<text x="43.50" y="714.06" font-size="10.8" fill="#5a5a5a" textLength="58.87" lengthAdjust="spacingAndGlyphs">Oct 21, 2020</text>
<text x="158.58" y="715.39" font-size="10.8" fill="#5a5a5a" textLength="34.02" lengthAdjust="spacingAndGlyphs">4,368 €</text>
<text x="254.18" y="715.39" font-size="10.8" fill="#3e3e3e" textLength="34.02" lengthAdjust="spacingAndGlyphs">7,250 €</text>
<text x="349.28" y="715.39" font-size="10.8" fill="#5a5a5a" textLength="34.02" lengthAdjust="spacingAndGlyphs">2,521 €</text>
<text x="445.28" y="715.39" font-size="10.8" fill="#5a5a5a" textLength="34.02" lengthAdjust="spacingAndGlyphs">1,258 €</text>
<text x="548.99" y="715.39" font-size="10.8" fill="#5a5a5a" textLength="25.51" lengthAdjust="spacingAndGlyphs">936 €</text>
<text x="629.01" y="715.39" font-size="10.8" fill="#484848" font-weight="700" textLength="40.99" lengthAdjust="spacingAndGlyphs">16,332 €</text>
<text x="43.50" y="742.73" font-size="10.8" fill="#5a5a5a" textLength="58.87" lengthAdjust="spacingAndGlyphs">Oct 22, 2020</text>
<text x="158.58" y="744.12" font-size="10.8" fill="#5a5a5a" textLength="34.02" lengthAdjust="spacingAndGlyphs">4,243 €</text>
<text x="254.18" y="744.12" font-size="10.8" fill="#3e3e3e" textLength="34.02" lengthAdjust="spacingAndGlyphs">7,264 €</text>
<text x="349.28" y="744.12" font-size="10.8" fill="#5a5a5a" textLength="34.02" lengthAdjust="spacingAndGlyphs">2,369 €</text>
<text x="445.28" y="744.12" font-size="10.8" fill="#5a5a5a" textLength="34.02" lengthAdjust="spacingAndGlyphs">1,268 €</text>
<text x="548.99" y="744.12" font-size="10.8" fill="#5a5a5a" textLength="25.51" lengthAdjust="spacingAndGlyphs">965 €</text>
<text x="629.01" y="744.12" font-size="10.8" fill="#484848" font-weight="700" textLength="40.99" lengthAdjust="spacingAndGlyphs">16,109 €</text>
<text x="43.50" y="771.40" font-size="10.8" fill="#5a5a5a" textLength="58.87" lengthAdjust="spacingAndGlyphs">Oct 23, 2020</text>
<text x="158.58" y="772.85" font-size="10.8" fill="#5a5a5a" textLength="34.02" lengthAdjust="spacingAndGlyphs">4,123 €</text>
<text x="254.18" y="772.85" font-size="10.8" fill="#3e3e3e" textLength="34.02" lengthAdjust="spacingAndGlyphs">7,256 €</text>
<text x="349.28" y="772.85" font-size="10.8" fill="#5a5a5a" textLength="34.02" lengthAdjust="spacingAndGlyphs">2,218 €</text>
<text x="445.28" y="772.85" font-size="10.8" fill="#5a5a5a" textLength="34.02" lengthAdjust="spacingAndGlyphs">1,235 €</text>
<text x="548.99" y="772.85" font-size="10.8" fill="#5a5a5a" textLength="25.51" lengthAdjust="spacingAndGlyphs">910 €</text>
<text x="629.01" y="772.85" font-size="10.8" fill="#484848" font-weight="700" textLength="40.99" lengthAdjust="spacingAndGlyphs">15,743 €</text>
<text x="43.50" y="800.07" font-size="10.8" fill="#5a5a5a" textLength="58.87" lengthAdjust="spacingAndGlyphs">Oct 24, 2020</text>
<text x="158.58" y="801.58" font-size="10.8" fill="#5a5a5a" textLength="34.02" lengthAdjust="spacingAndGlyphs">3,840 €</text>
<text x="254.18" y="801.58" font-size="10.8" fill="#3e3e3e" textLength="34.02" lengthAdjust="spacingAndGlyphs">6,617 €</text>
<text x="349.28" y="801.58" font-size="10.8" fill="#5a5a5a" textLength="34.02" lengthAdjust="spacingAndGlyphs">2,064 €</text>
<text x="445.28" y="801.58" font-size="10.8" fill="#5a5a5a" textLength="34.02" lengthAdjust="spacingAndGlyphs">1,132 €</text>
<text x="548.99" y="801.58" font-size="10.8" fill="#5a5a5a" textLength="25.51" lengthAdjust="spacingAndGlyphs">849 €</text>
<text x="629.01" y="801.58" font-size="10.8" fill="#484848" font-weight="700" textLength="40.99" lengthAdjust="spacingAndGlyphs">14,501 €</text>
<text x="43.50" y="828.74" font-size="10.8" fill="#5a5a5a" textLength="58.87" lengthAdjust="spacingAndGlyphs">Oct 25, 2020</text>
<text x="158.58" y="830.31" font-size="10.8" fill="#5a5a5a" textLength="34.02" lengthAdjust="spacingAndGlyphs">3,803 €</text>
<text x="254.18" y="830.31" font-size="10.8" fill="#3e3e3e" textLength="34.02" lengthAdjust="spacingAndGlyphs">6,551 €</text>
<text x="349.28" y="830.31" font-size="10.8" fill="#5a5a5a" textLength="34.02" lengthAdjust="spacingAndGlyphs">2,256 €</text>
<text x="445.28" y="830.31" font-size="10.8" fill="#5a5a5a" textLength="34.02" lengthAdjust="spacingAndGlyphs">1,140 €</text>
<text x="548.99" y="830.31" font-size="10.8" fill="#5a5a5a" textLength="25.51" lengthAdjust="spacingAndGlyphs">850 €</text>
<text x="629.01" y="830.31" font-size="10.8" fill="#484848" font-weight="700" textLength="40.99" lengthAdjust="spacingAndGlyphs">14,600 €</text>
<text x="43.50" y="857.41" font-size="10.8" fill="#5a5a5a" textLength="58.87" lengthAdjust="spacingAndGlyphs">Oct 26, 2020</text>
<text x="158.58" y="859.04" font-size="10.8" fill="#5a5a5a" textLength="34.02" lengthAdjust="spacingAndGlyphs">4,316 €</text>
<text x="254.18" y="859.04" font-size="10.8" fill="#3e3e3e" textLength="34.02" lengthAdjust="spacingAndGlyphs">7,239 €</text>
<text x="349.28" y="859.04" font-size="10.8" fill="#5a5a5a" textLength="34.02" lengthAdjust="spacingAndGlyphs">2,379 €</text>
<text x="445.28" y="859.04" font-size="10.8" fill="#5a5a5a" textLength="34.02" lengthAdjust="spacingAndGlyphs">1,282 €</text>
<text x="548.99" y="859.04" font-size="10.8" fill="#5a5a5a" textLength="25.51" lengthAdjust="spacingAndGlyphs">973 €</text>
<text x="629.01" y="859.04" font-size="10.8" fill="#484848" font-weight="700" textLength="40.99" lengthAdjust="spacingAndGlyphs">16,188 €</text>
</g>
<text x="43.50" y="880.90" font-size="10.8" fill="#484848" font-weight="700" textLength="48.30" lengthAdjust="spacingAndGlyphs">Grand to…</text>
<text x="145.75" y="883.30" font-size="10.8" fill="#484848" font-weight="700" textLength="46.85" lengthAdjust="spacingAndGlyphs">128,706 €</text>
<text x="241.35" y="883.30" font-size="10.8" fill="#484848" font-weight="700" textLength="46.85" lengthAdjust="spacingAndGlyphs">217,668 €</text>
<text x="342.31" y="883.30" font-size="10.8" fill="#484848" font-weight="700" textLength="40.99" lengthAdjust="spacingAndGlyphs">70,185 €</text>
<text x="438.31" y="883.30" font-size="10.8" fill="#484848" font-weight="700" textLength="40.99" lengthAdjust="spacingAndGlyphs">37,303 €</text>
<text x="533.51" y="883.30" font-size="10.8" fill="#484848" font-weight="700" textLength="40.99" lengthAdjust="spacingAndGlyphs">27,705 €</text>
<text x="623.15" y="883.30" font-size="10.8" fill="#484848" font-weight="700" textLength="46.85" lengthAdjust="spacingAndGlyphs">481,566 €</text>
</svg>
<svg id="chart-daily" width="1600" height="906" viewBox="0 0 1600 906">
<text x="724.25" y="109.70" font-size="17.1" fill="#4a4a4a" font-weight="700" textLength="202.75" lengthAdjust="spacingAndGlyphs">COST VS. BUDGET (DAILY)</text>
<line x1="758" x2="784.5" y1="126" y2="126" stroke="#2862c2" stroke-width="2"/><circle cx="771.25" cy="126" r="3.6" fill="#2862c2"/>
<text x="790.75" y="130.60" font-size="14.3" fill="#5a5a5a" textLength="33.50" lengthAdjust="spacingAndGlyphs">COST</text>
<line x1="848.3" x2="875" y1="126" y2="126" stroke="#111111" stroke-width="2"/>
<text x="881.25" y="130.60" font-size="14.3" fill="#5a5a5a" textLength="51.25" lengthAdjust="spacingAndGlyphs">BUDGET</text>
<rect x="757.5" y="148.60" width="802.5" height="1.2" fill="#e9e9e9"/>
<rect x="757.5" y="169.80" width="802.5" height="1.2" fill="#e9e9e9"/>
<rect x="757.5" y="191.00" width="802.5" height="1.2" fill="#e9e9e9"/>
<rect x="757.5" y="212.20" width="802.5" height="1.2" fill="#e9e9e9"/>
<rect x="757.5" y="233.70" width="802.5" height="1.2" fill="#e9e9e9"/>
<rect x="757.5" y="253.80" width="802.5" height="1.2" fill="#e9e9e9"/>
<rect x="757.5" y="275.30" width="802.5" height="1.2" fill="#e9e9e9"/>
<rect x="757.5" y="296.30" width="802.5" height="1.2" fill="#e9e9e9"/>
<rect x="757.5" y="317.55" width="802.5" height="1.3" fill="#707070"/>
<text x="728.34" y="153.00" font-size="10.8" fill="#6a6a6a" textLength="18.26" lengthAdjust="spacingAndGlyphs">20K</text>
<text x="728.34" y="195.25" font-size="10.8" fill="#6a6a6a" textLength="18.26" lengthAdjust="spacingAndGlyphs">15K</text>
<text x="728.34" y="237.50" font-size="10.8" fill="#6a6a6a" textLength="18.26" lengthAdjust="spacingAndGlyphs">10K</text>
<text x="734.05" y="279.75" font-size="10.8" fill="#6a6a6a" textLength="12.55" lengthAdjust="spacingAndGlyphs">5K</text>
<text x="740.90" y="322.00" font-size="10.8" fill="#6a6a6a" textLength="5.71" lengthAdjust="spacingAndGlyphs">0</text>
<polyline fill="none" stroke="#111111" stroke-width="2" stroke-linejoin="round" points="771.2,173.4 797.1,174.1 823.0,183.1 848.8,187.7 874.6,172.1 900.5,169.3 926.4,173.3 952.2,169.7 978.0,173.1 1003.9,185.3 1029.8,184.8 1055.6,167.8 1081.5,170.4 1107.3,171.8 1133.2,170.2 1159.0,170.7 1184.8,184.4 1210.7,184.8 1236.5,166.4 1262.4,168.9 1288.2,166.4 1314.1,168.5 1340.0,171.9 1365.8,183.4 1391.7,182.5 1417.5,167.7 1443.3,166.9 1469.2,168.7 1495.1,166.3 1520.9,163.5 1546.8,181.0"/>
<polyline fill="none" stroke="#2862c2" stroke-width="2" stroke-linejoin="round" points="771.2,186.6 797.1,187.2 823.0,195.3 848.8,199.5 874.6,185.4 900.5,182.8 926.4,186.4 952.2,183.2 978.0,186.3 1003.9,197.4 1029.8,197.0 1055.6,181.5 1081.5,183.8 1107.3,185.1 1133.2,183.7 1159.0,184.1 1184.8,196.6 1210.7,196.9 1236.5,180.2 1262.4,182.5 1288.2,180.2 1314.1,182.1 1340.0,185.2 1365.8,195.7 1391.7,194.8 1417.5,181.4 1443.3,180.7 1469.2,182.3 1495.1,180.1 1520.9,177.6 1546.8,193.5"/>
<g fill="#2862c2"><circle cx="771.2" cy="186.6" r="3.5"/><circle cx="797.1" cy="187.2" r="3.5"/><circle cx="823.0" cy="195.3" r="3.5"/><circle cx="848.8" cy="199.5" r="3.5"/><circle cx="874.6" cy="185.4" r="3.5"/><circle cx="900.5" cy="182.8" r="3.5"/><circle cx="926.4" cy="186.4" r="3.5"/><circle cx="952.2" cy="183.2" r="3.5"/><circle cx="978.0" cy="186.3" r="3.5"/><circle cx="1003.9" cy="197.4" r="3.5"/><circle cx="1029.8" cy="197.0" r="3.5"/><circle cx="1055.6" cy="181.5" r="3.5"/><circle cx="1081.5" cy="183.8" r="3.5"/><circle cx="1107.3" cy="185.1" r="3.5"/><circle cx="1133.2" cy="183.7" r="3.5"/><circle cx="1159.0" cy="184.1" r="3.5"/><circle cx="1184.8" cy="196.6" r="3.5"/><circle cx="1210.7" cy="196.9" r="3.5"/><circle cx="1236.5" cy="180.2" r="3.5"/><circle cx="1262.4" cy="182.5" r="3.5"/><circle cx="1288.2" cy="180.2" r="3.5"/><circle cx="1314.1" cy="182.1" r="3.5"/><circle cx="1340.0" cy="185.2" r="3.5"/><circle cx="1365.8" cy="195.7" r="3.5"/><circle cx="1391.7" cy="194.8" r="3.5"/><circle cx="1417.5" cy="181.4" r="3.5"/><circle cx="1443.3" cy="180.7" r="3.5"/><circle cx="1469.2" cy="182.3" r="3.5"/><circle cx="1495.1" cy="180.1" r="3.5"/><circle cx="1520.9" cy="177.6" r="3.5"/><circle cx="1546.8" cy="193.5" r="3.5"/></g>
<text transform="translate(772.75,334.15) rotate(-30)" x="-53.60" y="0" font-size="10.8" fill="#6a6a6a" textLength="53.60" lengthAdjust="spacingAndGlyphs">Oct 1, 2020</text>
<text transform="translate(798.60,334.15) rotate(-30)" x="-53.60" y="0" font-size="10.8" fill="#6a6a6a" textLength="53.60" lengthAdjust="spacingAndGlyphs">Oct 2, 2020</text>
<text transform="translate(824.45,334.15) rotate(-30)" x="-53.60" y="0" font-size="10.8" fill="#6a6a6a" textLength="53.60" lengthAdjust="spacingAndGlyphs">Oct 3, 2020</text>
<text transform="translate(850.30,334.15) rotate(-30)" x="-53.60" y="0" font-size="10.8" fill="#6a6a6a" textLength="53.60" lengthAdjust="spacingAndGlyphs">Oct 4, 2020</text>
<text transform="translate(876.15,334.15) rotate(-30)" x="-53.60" y="0" font-size="10.8" fill="#6a6a6a" textLength="53.60" lengthAdjust="spacingAndGlyphs">Oct 5, 2020</text>
<text transform="translate(902.00,334.15) rotate(-30)" x="-53.60" y="0" font-size="10.8" fill="#6a6a6a" textLength="53.60" lengthAdjust="spacingAndGlyphs">Oct 6, 2020</text>
<text transform="translate(927.85,334.15) rotate(-30)" x="-53.60" y="0" font-size="10.8" fill="#6a6a6a" textLength="53.60" lengthAdjust="spacingAndGlyphs">Oct 7, 2020</text>
<text transform="translate(953.70,334.15) rotate(-30)" x="-53.60" y="0" font-size="10.8" fill="#6a6a6a" textLength="53.60" lengthAdjust="spacingAndGlyphs">Oct 8, 2020</text>
<text transform="translate(979.55,334.15) rotate(-30)" x="-53.60" y="0" font-size="10.8" fill="#6a6a6a" textLength="53.60" lengthAdjust="spacingAndGlyphs">Oct 9, 2020</text>
<text transform="translate(1005.40,334.15) rotate(-30)" x="-59.37" y="0" font-size="10.8" fill="#6a6a6a" textLength="59.37" lengthAdjust="spacingAndGlyphs">Oct 10, 2020</text>
<text transform="translate(1031.25,334.15) rotate(-30)" x="-58.60" y="0" font-size="10.8" fill="#6a6a6a" textLength="58.60" lengthAdjust="spacingAndGlyphs">Oct 11, 2020</text>
<text transform="translate(1057.10,334.15) rotate(-30)" x="-59.37" y="0" font-size="10.8" fill="#6a6a6a" textLength="59.37" lengthAdjust="spacingAndGlyphs">Oct 12, 2020</text>
<text transform="translate(1082.95,334.15) rotate(-30)" x="-59.37" y="0" font-size="10.8" fill="#6a6a6a" textLength="59.37" lengthAdjust="spacingAndGlyphs">Oct 13, 2020</text>
<text transform="translate(1108.80,334.15) rotate(-30)" x="-59.37" y="0" font-size="10.8" fill="#6a6a6a" textLength="59.37" lengthAdjust="spacingAndGlyphs">Oct 14, 2020</text>
<text transform="translate(1134.65,334.15) rotate(-30)" x="-59.37" y="0" font-size="10.8" fill="#6a6a6a" textLength="59.37" lengthAdjust="spacingAndGlyphs">Oct 15, 2020</text>
<text transform="translate(1160.50,334.15) rotate(-30)" x="-59.37" y="0" font-size="10.8" fill="#6a6a6a" textLength="59.37" lengthAdjust="spacingAndGlyphs">Oct 16, 2020</text>
<text transform="translate(1186.35,334.15) rotate(-30)" x="-59.37" y="0" font-size="10.8" fill="#6a6a6a" textLength="59.37" lengthAdjust="spacingAndGlyphs">Oct 17, 2020</text>
<text transform="translate(1212.20,334.15) rotate(-30)" x="-59.37" y="0" font-size="10.8" fill="#6a6a6a" textLength="59.37" lengthAdjust="spacingAndGlyphs">Oct 18, 2020</text>
<text transform="translate(1238.05,334.15) rotate(-30)" x="-59.37" y="0" font-size="10.8" fill="#6a6a6a" textLength="59.37" lengthAdjust="spacingAndGlyphs">Oct 19, 2020</text>
<text transform="translate(1263.90,334.15) rotate(-30)" x="-59.37" y="0" font-size="10.8" fill="#6a6a6a" textLength="59.37" lengthAdjust="spacingAndGlyphs">Oct 20, 2020</text>
<text transform="translate(1289.75,334.15) rotate(-30)" x="-59.37" y="0" font-size="10.8" fill="#6a6a6a" textLength="59.37" lengthAdjust="spacingAndGlyphs">Oct 21, 2020</text>
<text transform="translate(1315.60,334.15) rotate(-30)" x="-59.37" y="0" font-size="10.8" fill="#6a6a6a" textLength="59.37" lengthAdjust="spacingAndGlyphs">Oct 22, 2020</text>
<text transform="translate(1341.45,334.15) rotate(-30)" x="-59.37" y="0" font-size="10.8" fill="#6a6a6a" textLength="59.37" lengthAdjust="spacingAndGlyphs">Oct 23, 2020</text>
<text transform="translate(1367.30,334.15) rotate(-30)" x="-59.37" y="0" font-size="10.8" fill="#6a6a6a" textLength="59.37" lengthAdjust="spacingAndGlyphs">Oct 24, 2020</text>
<text transform="translate(1393.15,334.15) rotate(-30)" x="-59.37" y="0" font-size="10.8" fill="#6a6a6a" textLength="59.37" lengthAdjust="spacingAndGlyphs">Oct 25, 2020</text>
<text transform="translate(1419.00,334.15) rotate(-30)" x="-59.37" y="0" font-size="10.8" fill="#6a6a6a" textLength="59.37" lengthAdjust="spacingAndGlyphs">Oct 26, 2020</text>
<text transform="translate(1444.85,334.15) rotate(-30)" x="-59.37" y="0" font-size="10.8" fill="#6a6a6a" textLength="59.37" lengthAdjust="spacingAndGlyphs">Oct 27, 2020</text>
<text transform="translate(1470.70,334.15) rotate(-30)" x="-59.37" y="0" font-size="10.8" fill="#6a6a6a" textLength="59.37" lengthAdjust="spacingAndGlyphs">Oct 28, 2020</text>
<text transform="translate(1496.55,334.15) rotate(-30)" x="-59.37" y="0" font-size="10.8" fill="#6a6a6a" textLength="59.37" lengthAdjust="spacingAndGlyphs">Oct 29, 2020</text>
<text transform="translate(1522.40,334.15) rotate(-30)" x="-59.37" y="0" font-size="10.8" fill="#6a6a6a" textLength="59.37" lengthAdjust="spacingAndGlyphs">Oct 30, 2020</text>
<text transform="translate(1548.25,334.15) rotate(-30)" x="-59.37" y="0" font-size="10.8" fill="#6a6a6a" textLength="59.37" lengthAdjust="spacingAndGlyphs">Oct 31, 2020</text>
</svg>
<svg id="chart-cumulative" width="1600" height="906" viewBox="0 0 1600 906">
<text x="724.10" y="418.00" font-size="17.1" fill="#4a4a4a" font-weight="700" textLength="262.70" lengthAdjust="spacingAndGlyphs">COST VS. BUDGET (CUMULATIVE)</text>
<line x1="768.6" x2="795.2" y1="434.2" y2="434.2" stroke="#2862c2" stroke-width="2"/><circle cx="781.9" cy="434.2" r="3.6" fill="#2862c2"/>
<text x="801.40" y="438.80" font-size="14.3" fill="#5a5a5a" textLength="33.50" lengthAdjust="spacingAndGlyphs">COST</text>
<line x1="859.2" x2="885.6" y1="434.2" y2="434.2" stroke="#111111" stroke-width="2"/>
<text x="892.00" y="438.80" font-size="14.3" fill="#5a5a5a" textLength="51.25" lengthAdjust="spacingAndGlyphs">BUDGET</text>
<rect x="768" y="579.75" width="792" height="1.2" fill="#e9e9e9"/>
<rect x="768" y="555.10" width="792" height="1.2" fill="#e9e9e9"/>
<rect x="768" y="530.45" width="792" height="1.2" fill="#e9e9e9"/>
<rect x="768" y="505.80" width="792" height="1.2" fill="#e9e9e9"/>
<rect x="768" y="481.15" width="792" height="1.2" fill="#e9e9e9"/>
<rect x="768" y="456.50" width="792" height="1.2" fill="#e9e9e9"/>
<rect x="768" y="604.35" width="792" height="1.3" fill="#707070"/>
<text x="733.24" y="460.90" font-size="10.8" fill="#6a6a6a" textLength="23.96" lengthAdjust="spacingAndGlyphs">600K</text>
<text x="733.24" y="510.20" font-size="10.8" fill="#6a6a6a" textLength="23.96" lengthAdjust="spacingAndGlyphs">400K</text>
<text x="733.24" y="559.50" font-size="10.8" fill="#6a6a6a" textLength="23.96" lengthAdjust="spacingAndGlyphs">200K</text>
<text x="751.50" y="608.80" font-size="10.8" fill="#6a6a6a" textLength="5.71" lengthAdjust="spacingAndGlyphs">0</text>
<polyline fill="none" stroke="#111111" stroke-width="2" stroke-linejoin="round" points="781.3,600.8 806.8,596.6 832.3,592.6 857.9,588.8 883.4,584.6 908.9,580.2 934.4,576.0 959.9,571.7 985.5,567.4 1011.0,563.6 1036.5,559.7 1062.0,555.3 1087.5,551.0 1113.1,546.7 1138.6,542.4 1164.1,538.1 1189.6,534.2 1215.1,530.3 1240.7,525.8 1266.2,521.5 1291.7,517.1 1317.2,512.7 1342.7,508.4 1368.3,504.5 1393.8,500.5 1419.3,496.1 1444.8,491.7 1470.3,487.4 1495.9,482.9 1521.4,478.4 1546.9,474.4"/>
<polyline fill="none" stroke="#2862c2" stroke-width="2" stroke-linejoin="round" points="781.3,601.2 806.8,597.3 832.3,593.8 857.9,590.3 883.4,586.4 908.9,582.5 934.4,578.6 959.9,574.7 985.5,570.8 1011.0,567.3 1036.5,563.8 1062.0,559.8 1087.5,555.9 1113.1,552.0 1138.6,548.1 1164.1,544.2 1189.6,540.6 1215.1,537.1 1240.7,533.0 1266.2,529.1 1291.7,525.1 1317.2,521.1 1342.7,517.2 1368.3,513.6 1393.8,510.0 1419.3,506.0 1444.8,502.0 1470.3,498.1 1495.9,494.0 1521.4,489.9 1546.9,486.3"/>
<g fill="#2862c2"><circle cx="781.3" cy="601.2" r="3.5"/><circle cx="806.8" cy="597.3" r="3.5"/><circle cx="832.3" cy="593.8" r="3.5"/><circle cx="857.9" cy="590.3" r="3.5"/><circle cx="883.4" cy="586.4" r="3.5"/><circle cx="908.9" cy="582.5" r="3.5"/><circle cx="934.4" cy="578.6" r="3.5"/><circle cx="959.9" cy="574.7" r="3.5"/><circle cx="985.5" cy="570.8" r="3.5"/><circle cx="1011.0" cy="567.3" r="3.5"/><circle cx="1036.5" cy="563.8" r="3.5"/><circle cx="1062.0" cy="559.8" r="3.5"/><circle cx="1087.5" cy="555.9" r="3.5"/><circle cx="1113.1" cy="552.0" r="3.5"/><circle cx="1138.6" cy="548.1" r="3.5"/><circle cx="1164.1" cy="544.2" r="3.5"/><circle cx="1189.6" cy="540.6" r="3.5"/><circle cx="1215.1" cy="537.1" r="3.5"/><circle cx="1240.7" cy="533.0" r="3.5"/><circle cx="1266.2" cy="529.1" r="3.5"/><circle cx="1291.7" cy="525.1" r="3.5"/><circle cx="1317.2" cy="521.1" r="3.5"/><circle cx="1342.7" cy="517.2" r="3.5"/><circle cx="1368.3" cy="513.6" r="3.5"/><circle cx="1393.8" cy="510.0" r="3.5"/><circle cx="1419.3" cy="506.0" r="3.5"/><circle cx="1444.8" cy="502.0" r="3.5"/><circle cx="1470.3" cy="498.1" r="3.5"/><circle cx="1495.9" cy="494.0" r="3.5"/><circle cx="1521.4" cy="489.9" r="3.5"/><circle cx="1546.9" cy="486.3" r="3.5"/></g>
<text transform="translate(782.80,620.70) rotate(-30)" x="-53.60" y="0" font-size="10.8" fill="#6a6a6a" textLength="53.60" lengthAdjust="spacingAndGlyphs">Oct 1, 2020</text>
<text transform="translate(833.84,620.70) rotate(-30)" x="-53.60" y="0" font-size="10.8" fill="#6a6a6a" textLength="53.60" lengthAdjust="spacingAndGlyphs">Oct 3, 2020</text>
<text transform="translate(884.88,620.70) rotate(-30)" x="-53.60" y="0" font-size="10.8" fill="#6a6a6a" textLength="53.60" lengthAdjust="spacingAndGlyphs">Oct 5, 2020</text>
<text transform="translate(935.92,620.70) rotate(-30)" x="-53.60" y="0" font-size="10.8" fill="#6a6a6a" textLength="53.60" lengthAdjust="spacingAndGlyphs">Oct 7, 2020</text>
<text transform="translate(986.96,620.70) rotate(-30)" x="-53.60" y="0" font-size="10.8" fill="#6a6a6a" textLength="53.60" lengthAdjust="spacingAndGlyphs">Oct 9, 2020</text>
<text transform="translate(1038.00,620.70) rotate(-30)" x="-58.60" y="0" font-size="10.8" fill="#6a6a6a" textLength="58.60" lengthAdjust="spacingAndGlyphs">Oct 11, 2020</text>
<text transform="translate(1089.04,620.70) rotate(-30)" x="-59.37" y="0" font-size="10.8" fill="#6a6a6a" textLength="59.37" lengthAdjust="spacingAndGlyphs">Oct 13, 2020</text>
<text transform="translate(1140.08,620.70) rotate(-30)" x="-59.37" y="0" font-size="10.8" fill="#6a6a6a" textLength="59.37" lengthAdjust="spacingAndGlyphs">Oct 15, 2020</text>
<text transform="translate(1191.12,620.70) rotate(-30)" x="-59.37" y="0" font-size="10.8" fill="#6a6a6a" textLength="59.37" lengthAdjust="spacingAndGlyphs">Oct 17, 2020</text>
<text transform="translate(1242.16,620.70) rotate(-30)" x="-59.37" y="0" font-size="10.8" fill="#6a6a6a" textLength="59.37" lengthAdjust="spacingAndGlyphs">Oct 19, 2020</text>
<text transform="translate(1293.20,620.70) rotate(-30)" x="-59.37" y="0" font-size="10.8" fill="#6a6a6a" textLength="59.37" lengthAdjust="spacingAndGlyphs">Oct 21, 2020</text>
<text transform="translate(1344.24,620.70) rotate(-30)" x="-59.37" y="0" font-size="10.8" fill="#6a6a6a" textLength="59.37" lengthAdjust="spacingAndGlyphs">Oct 23, 2020</text>
<text transform="translate(1395.28,620.70) rotate(-30)" x="-59.37" y="0" font-size="10.8" fill="#6a6a6a" textLength="59.37" lengthAdjust="spacingAndGlyphs">Oct 25, 2020</text>
<text transform="translate(1446.32,620.70) rotate(-30)" x="-59.37" y="0" font-size="10.8" fill="#6a6a6a" textLength="59.37" lengthAdjust="spacingAndGlyphs">Oct 27, 2020</text>
<text transform="translate(1497.36,620.70) rotate(-30)" x="-59.37" y="0" font-size="10.8" fill="#6a6a6a" textLength="59.37" lengthAdjust="spacingAndGlyphs">Oct 29, 2020</text>
<text transform="translate(1548.40,620.70) rotate(-30)" x="-59.37" y="0" font-size="10.8" fill="#6a6a6a" textLength="59.37" lengthAdjust="spacingAndGlyphs">Oct 31, 2020</text>
</svg>
<svg id="chart-deviation" width="1600" height="906" viewBox="0 0 1600 906">
<text x="745.60" y="694.90" font-size="17.1" fill="#4a4a4a" font-weight="700" textLength="133.00" lengthAdjust="spacingAndGlyphs">COST DEVIATION</text>
<rect x="757.7" y="714.3" width="27.2" height="13.5" fill="#5085ec"/>
<text x="790.60" y="725.80" font-size="14.3" fill="#5a5a5a" textLength="119.50" lengthAdjust="spacingAndGlyphs">EXPENDITURE GAP</text>
<line x1="933.4" x2="960.2" y1="720.8" y2="720.8" stroke="#c40000" stroke-width="2"/>
<text x="966.30" y="725.80" font-size="14.3" fill="#5a5a5a" textLength="82.40" lengthAdjust="spacingAndGlyphs">BUDGET GAP</text>
<rect x="757.1" y="770.12" width="802.9" height="1.2" fill="#e9e9e9"/>
<rect x="757.1" y="796.44" width="802.9" height="1.2" fill="#e9e9e9"/>
<rect x="757.1" y="822.76" width="802.9" height="1.2" fill="#e9e9e9"/>
<rect x="757.1" y="849.08" width="802.9" height="1.2" fill="#e9e9e9"/>
<rect x="762.85" y="744.4" width="15.7" height="82.00" fill="#5085ec"/>
<rect x="788.73" y="744.4" width="15.7" height="81.60" fill="#5085ec"/>
<rect x="814.61" y="744.4" width="15.7" height="76.53" fill="#5085ec"/>
<rect x="840.49" y="744.4" width="15.7" height="73.92" fill="#5085ec"/>
<rect x="866.37" y="744.4" width="15.7" height="82.72" fill="#5085ec"/>
<rect x="892.25" y="744.4" width="15.7" height="84.32" fill="#5085ec"/>
<rect x="918.13" y="744.4" width="15.7" height="82.08" fill="#5085ec"/>
<rect x="944.01" y="744.4" width="15.7" height="84.10" fill="#5085ec"/>
<rect x="969.89" y="744.4" width="15.7" height="82.15" fill="#5085ec"/>
<rect x="995.77" y="744.4" width="15.7" height="75.25" fill="#5085ec"/>
<rect x="1021.65" y="744.4" width="15.7" height="75.53" fill="#5085ec"/>
<rect x="1047.53" y="744.4" width="15.7" height="85.18" fill="#5085ec"/>
<rect x="1073.41" y="744.4" width="15.7" height="83.73" fill="#5085ec"/>
<rect x="1099.29" y="744.4" width="15.7" height="82.93" fill="#5085ec"/>
<rect x="1125.17" y="744.4" width="15.7" height="83.79" fill="#5085ec"/>
<rect x="1151.05" y="744.4" width="15.7" height="83.53" fill="#5085ec"/>
<rect x="1176.93" y="744.4" width="15.7" height="75.76" fill="#5085ec"/>
<rect x="1202.81" y="744.4" width="15.7" height="75.56" fill="#5085ec"/>
<rect x="1228.69" y="744.4" width="15.7" height="85.98" fill="#5085ec"/>
<rect x="1254.57" y="744.4" width="15.7" height="84.55" fill="#5085ec"/>
<rect x="1280.45" y="744.4" width="15.7" height="85.97" fill="#5085ec"/>
<rect x="1306.33" y="744.4" width="15.7" height="84.80" fill="#5085ec"/>
<rect x="1332.21" y="744.4" width="15.7" height="82.87" fill="#5085ec"/>
<rect x="1358.09" y="744.4" width="15.7" height="76.33" fill="#5085ec"/>
<rect x="1383.97" y="744.4" width="15.7" height="76.85" fill="#5085ec"/>
<rect x="1409.85" y="744.4" width="15.7" height="85.21" fill="#5085ec"/>
<rect x="1435.73" y="744.4" width="15.7" height="85.67" fill="#5085ec"/>
<rect x="1461.61" y="744.4" width="15.7" height="84.68" fill="#5085ec"/>
<rect x="1487.49" y="744.4" width="15.7" height="86.05" fill="#5085ec"/>
<rect x="1513.37" y="744.4" width="15.7" height="87.60" fill="#5085ec"/>
<rect x="1539.25" y="744.4" width="15.7" height="77.71" fill="#5085ec"/>
<rect x="757.1" y="743.6999999999999" width="802.9" height="1.4" fill="#707070"/>
<rect x="770.7" y="743.4499999999999" width="776.4" height="1.8" fill="#c40000"/>
<text x="740.70" y="748.20" font-size="10.8" fill="#6a6a6a" textLength="5.71" lengthAdjust="spacingAndGlyphs">0</text>
<text x="730.44" y="800.84" font-size="10.8" fill="#6a6a6a" textLength="15.97" lengthAdjust="spacingAndGlyphs">-1K</text>
<text x="730.44" y="853.48" font-size="10.8" fill="#6a6a6a" textLength="15.97" lengthAdjust="spacingAndGlyphs">-2K</text>
<text transform="translate(771.90,865.00) rotate(-30)" x="-53.60" y="0" font-size="10.8" fill="#6a6a6a" textLength="53.60" lengthAdjust="spacingAndGlyphs">Oct 1, 2020</text>
<text transform="translate(797.78,865.00) rotate(-30)" x="-53.60" y="0" font-size="10.8" fill="#6a6a6a" textLength="53.60" lengthAdjust="spacingAndGlyphs">Oct 2, 2020</text>
<text transform="translate(823.66,865.00) rotate(-30)" x="-53.60" y="0" font-size="10.8" fill="#6a6a6a" textLength="53.60" lengthAdjust="spacingAndGlyphs">Oct 3, 2020</text>
<text transform="translate(849.54,865.00) rotate(-30)" x="-53.60" y="0" font-size="10.8" fill="#6a6a6a" textLength="53.60" lengthAdjust="spacingAndGlyphs">Oct 4, 2020</text>
<text transform="translate(875.42,865.00) rotate(-30)" x="-53.60" y="0" font-size="10.8" fill="#6a6a6a" textLength="53.60" lengthAdjust="spacingAndGlyphs">Oct 5, 2020</text>
<text transform="translate(901.30,865.00) rotate(-30)" x="-53.60" y="0" font-size="10.8" fill="#6a6a6a" textLength="53.60" lengthAdjust="spacingAndGlyphs">Oct 6, 2020</text>
<text transform="translate(927.18,865.00) rotate(-30)" x="-53.60" y="0" font-size="10.8" fill="#6a6a6a" textLength="53.60" lengthAdjust="spacingAndGlyphs">Oct 7, 2020</text>
<text transform="translate(953.06,865.00) rotate(-30)" x="-53.60" y="0" font-size="10.8" fill="#6a6a6a" textLength="53.60" lengthAdjust="spacingAndGlyphs">Oct 8, 2020</text>
<text transform="translate(978.94,865.00) rotate(-30)" x="-53.60" y="0" font-size="10.8" fill="#6a6a6a" textLength="53.60" lengthAdjust="spacingAndGlyphs">Oct 9, 2020</text>
<text transform="translate(1004.82,865.00) rotate(-30)" x="-59.37" y="0" font-size="10.8" fill="#6a6a6a" textLength="59.37" lengthAdjust="spacingAndGlyphs">Oct 10, 2020</text>
<text transform="translate(1030.70,865.00) rotate(-30)" x="-58.60" y="0" font-size="10.8" fill="#6a6a6a" textLength="58.60" lengthAdjust="spacingAndGlyphs">Oct 11, 2020</text>
<text transform="translate(1056.58,865.00) rotate(-30)" x="-59.37" y="0" font-size="10.8" fill="#6a6a6a" textLength="59.37" lengthAdjust="spacingAndGlyphs">Oct 12, 2020</text>
<text transform="translate(1082.46,865.00) rotate(-30)" x="-59.37" y="0" font-size="10.8" fill="#6a6a6a" textLength="59.37" lengthAdjust="spacingAndGlyphs">Oct 13, 2020</text>
<text transform="translate(1108.34,865.00) rotate(-30)" x="-59.37" y="0" font-size="10.8" fill="#6a6a6a" textLength="59.37" lengthAdjust="spacingAndGlyphs">Oct 14, 2020</text>
<text transform="translate(1134.22,865.00) rotate(-30)" x="-59.37" y="0" font-size="10.8" fill="#6a6a6a" textLength="59.37" lengthAdjust="spacingAndGlyphs">Oct 15, 2020</text>
<text transform="translate(1160.10,865.00) rotate(-30)" x="-59.37" y="0" font-size="10.8" fill="#6a6a6a" textLength="59.37" lengthAdjust="spacingAndGlyphs">Oct 16, 2020</text>
<text transform="translate(1185.98,865.00) rotate(-30)" x="-59.37" y="0" font-size="10.8" fill="#6a6a6a" textLength="59.37" lengthAdjust="spacingAndGlyphs">Oct 17, 2020</text>
<text transform="translate(1211.86,865.00) rotate(-30)" x="-59.37" y="0" font-size="10.8" fill="#6a6a6a" textLength="59.37" lengthAdjust="spacingAndGlyphs">Oct 18, 2020</text>
<text transform="translate(1237.74,865.00) rotate(-30)" x="-59.37" y="0" font-size="10.8" fill="#6a6a6a" textLength="59.37" lengthAdjust="spacingAndGlyphs">Oct 19, 2020</text>
<text transform="translate(1263.62,865.00) rotate(-30)" x="-59.37" y="0" font-size="10.8" fill="#6a6a6a" textLength="59.37" lengthAdjust="spacingAndGlyphs">Oct 20, 2020</text>
<text transform="translate(1289.50,865.00) rotate(-30)" x="-59.37" y="0" font-size="10.8" fill="#6a6a6a" textLength="59.37" lengthAdjust="spacingAndGlyphs">Oct 21, 2020</text>
<text transform="translate(1315.38,865.00) rotate(-30)" x="-59.37" y="0" font-size="10.8" fill="#6a6a6a" textLength="59.37" lengthAdjust="spacingAndGlyphs">Oct 22, 2020</text>
<text transform="translate(1341.26,865.00) rotate(-30)" x="-59.37" y="0" font-size="10.8" fill="#6a6a6a" textLength="59.37" lengthAdjust="spacingAndGlyphs">Oct 23, 2020</text>
<text transform="translate(1367.14,865.00) rotate(-30)" x="-59.37" y="0" font-size="10.8" fill="#6a6a6a" textLength="59.37" lengthAdjust="spacingAndGlyphs">Oct 24, 2020</text>
<text transform="translate(1393.02,865.00) rotate(-30)" x="-59.37" y="0" font-size="10.8" fill="#6a6a6a" textLength="59.37" lengthAdjust="spacingAndGlyphs">Oct 25, 2020</text>
<text transform="translate(1418.90,865.00) rotate(-30)" x="-59.37" y="0" font-size="10.8" fill="#6a6a6a" textLength="59.37" lengthAdjust="spacingAndGlyphs">Oct 26, 2020</text>
<text transform="translate(1444.78,865.00) rotate(-30)" x="-59.37" y="0" font-size="10.8" fill="#6a6a6a" textLength="59.37" lengthAdjust="spacingAndGlyphs">Oct 27, 2020</text>
<text transform="translate(1470.66,865.00) rotate(-30)" x="-59.37" y="0" font-size="10.8" fill="#6a6a6a" textLength="59.37" lengthAdjust="spacingAndGlyphs">Oct 28, 2020</text>
<text transform="translate(1496.54,865.00) rotate(-30)" x="-59.37" y="0" font-size="10.8" fill="#6a6a6a" textLength="59.37" lengthAdjust="spacingAndGlyphs">Oct 29, 2020</text>
<text transform="translate(1522.42,865.00) rotate(-30)" x="-59.37" y="0" font-size="10.8" fill="#6a6a6a" textLength="59.37" lengthAdjust="spacingAndGlyphs">Oct 30, 2020</text>
<text transform="translate(1548.30,865.00) rotate(-30)" x="-59.37" y="0" font-size="10.8" fill="#6a6a6a" textLength="59.37" lengthAdjust="spacingAndGlyphs">Oct 31, 2020</text>
</svg>
</body></html>
